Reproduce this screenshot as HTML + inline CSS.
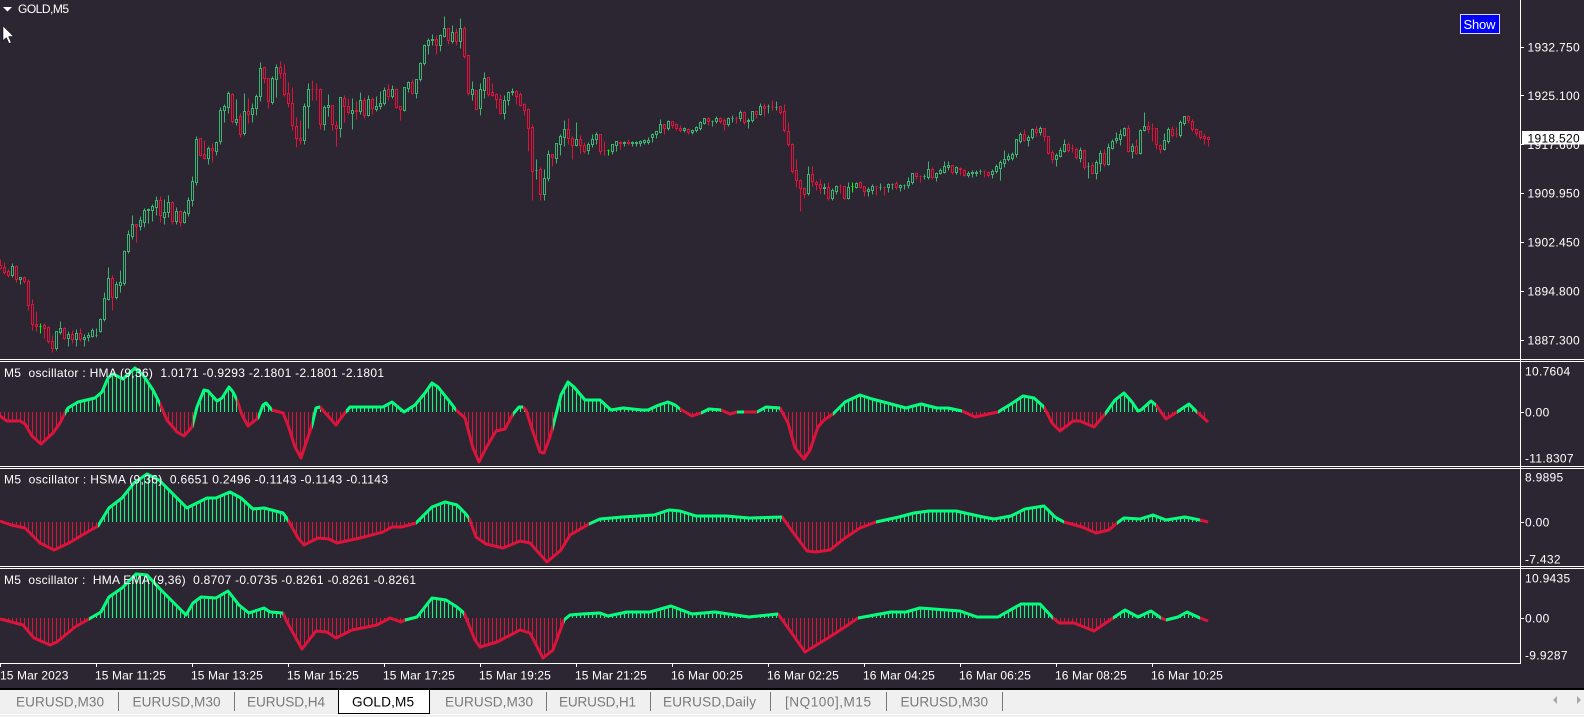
<!DOCTYPE html>
<html><head><meta charset="utf-8"><title>GOLD,M5</title>
<style>
html,body{margin:0;padding:0;background:#2b2632;width:1584px;height:717px;overflow:hidden}
svg{display:block}
text{font-family:"Liberation Sans",sans-serif;font-size:12px;fill:#fff;white-space:pre}
.ax{letter-spacing:.3px}
.dt{letter-spacing:.1px}
.tb{font-size:13.6px;fill:#7a7a7a}
</style></head><body>
<svg width="1584" height="717" viewBox="0 0 1584 717" xmlns="http://www.w3.org/2000/svg">
<defs>
<pattern id="pg" patternUnits="userSpaceOnUse" width="4" height="10"><rect width="1" height="10" fill="#00ff7f" shape-rendering="crispEdges"/></pattern>
<pattern id="pr" patternUnits="userSpaceOnUse" width="4" height="10"><rect width="1" height="10" fill="#dc143c" shape-rendering="crispEdges"/></pattern>
<path id="c1" d="M0 416L7 421 20 421 25 424 32 436 41 444 53 433 60 423 65 413 68 408 78 402 95 398 102 392 108 378 113 374 123 379 135 368 143 375 153 390 160 404 167 420 177 432 184 436 192 427 193 423 197 407 204 390 208 391 217 401 222 398 229 387 233 392 237 400 242 415 248 426 258 418 263 405 266 403 272 410 283 413 288 425 295 447 301 458 312 425 316 408 320 407 336 425 344 414 350 407 367 407 383 407 392 402 404 412 415 405 425 393 432 383 438 387 450 402 456 410 465 418 473 448 479 462 486 448 496 431 505 429 513 414 519 407 523 407 526 410 534 435 540 452 544 453 550 437 553 426 561 395 568 382 574 387 585 400 597 400 600 400 611 410 623 408 642 410 648 410 659 405 668 402 675 405 680 409 692 416 701 413 709 409 721 410 730 414 737 412 744 412 757 412 766 407 780 408 788 423 795 448 804 459 810 450 818 427 824 420 833 414 845 402 860 395 872 399 891 404 906 408 921 404 937 408 948 408 962 411 975 417 998 412 1011 404 1023 396 1034 398 1044 407 1052 423 1060 431 1073 421 1080 421 1094 427 1105 414 1115 400 1124 393 1132 402 1138 411 1141 410 1151 401 1156 405 1166 419 1177 412 1189 404 1197 412 1208 422"/>
<path id="c2" d="M0 521L11 525 25 528 40 543 54 550 69 543 84 534 98 526 109 508 122 498 134 483 147 474 159 480 172 493 187 508 195 504 207 498 216 498 230 492 241 498 253 509 264 508 283 513 288 520 298 538 304 545 318 538 329 539 337 543 360 538 383 532 392 527 402 527 416 523 432 507 445 502 457 505 465 513 469 518 476 537 486 544 503 548 520 541 530 543 547 562 561 550 570 535 589 524 600 519 623 517 654 515 669 510 680 511 696 516 726 516 749 518 782 517 795 535 807 551 816 552 830 550 845 538 860 528 876 522 899 517 914 513 929 511 956 511 983 517 994 519 1011 516 1025 509 1044 506 1055 517 1064 522 1082 527 1096 533 1109 530 1117 523 1124 518 1140 519 1153 515 1166 520 1185 517 1200 520 1208 522"/>
<path id="c3" d="M0 619L23 625 34 638 50 645 57 642 75 627 89 619 101 612 109 597 122 588 136 574 147 575 161 590 186 615 193 603 201 597 216 598 228 591 239 605 249 613 264 608 270 612 283 613 287 622 302 649 316 631 327 632 336 638 352 630 377 625 390 618 401 622 405 620 417 617 432 598 446 600 457 607 464 613 475 640 480 647 497 642 520 630 530 633 543 658 553 650 564 620 570 615 582 614 600 613 608 616 627 612 650 612 671 606 692 614 715 612 749 617 778 614 791 632 805 652 828 638 845 627 858 618 891 612 906 612 920 608 960 611 977 617 998 617 1021 604 1040 604 1053 618 1059 623 1074 623 1094 631 1113 618 1125 610 1138 617 1151 611 1161 618 1166 620 1178 617 1187 612 1200 618 1208 621"/>
<path id="h1" d="M0 412V416L7 421 20 421 25 424 32 436 41 444 53 433 60 423 65 413 68 408 78 402 95 398 102 392 108 378 113 374 123 379 135 368 143 375 153 390 160 404 167 420 177 432 184 436 192 427 193 423 197 407 204 390 208 391 217 401 222 398 229 387 233 392 237 400 242 415 248 426 258 418 263 405 266 403 272 410 283 413 288 425 295 447 301 458 312 425 316 408 320 407 336 425 344 414 350 407 367 407 383 407 392 402 404 412 415 405 425 393 432 383 438 387 450 402 456 410 465 418 473 448 479 462 486 448 496 431 505 429 513 414 519 407 523 407 526 410 534 435 540 452 544 453 550 437 553 426 561 395 568 382 574 387 585 400 597 400 600 400 611 410 623 408 642 410 648 410 659 405 668 402 675 405 680 409 692 416 701 413 709 409 721 410 730 414 737 412 744 412 757 412 766 407 780 408 788 423 795 448 804 459 810 450 818 427 824 420 833 414 845 402 860 395 872 399 891 404 906 408 921 404 937 408 948 408 962 411 975 417 998 412 1011 404 1023 396 1034 398 1044 407 1052 423 1060 431 1073 421 1080 421 1094 427 1105 414 1115 400 1124 393 1132 402 1138 411 1141 410 1151 401 1156 405 1166 419 1177 412 1189 404 1197 412 1208 422V412Z"/>
<path id="h2" d="M0 522V521L11 525 25 528 40 543 54 550 69 543 84 534 98 526 109 508 122 498 134 483 147 474 159 480 172 493 187 508 195 504 207 498 216 498 230 492 241 498 253 509 264 508 283 513 288 520 298 538 304 545 318 538 329 539 337 543 360 538 383 532 392 527 402 527 416 523 432 507 445 502 457 505 465 513 469 518 476 537 486 544 503 548 520 541 530 543 547 562 561 550 570 535 589 524 600 519 623 517 654 515 669 510 680 511 696 516 726 516 749 518 782 517 795 535 807 551 816 552 830 550 845 538 860 528 876 522 899 517 914 513 929 511 956 511 983 517 994 519 1011 516 1025 509 1044 506 1055 517 1064 522 1082 527 1096 533 1109 530 1117 523 1124 518 1140 519 1153 515 1166 520 1185 517 1200 520 1208 522Z"/>
<path id="h3" d="M0 618V619L23 625 34 638 50 645 57 642 75 627 89 619 101 612 109 597 122 588 136 574 147 575 161 590 186 615 193 603 201 597 216 598 228 591 239 605 249 613 264 608 270 612 283 613 287 622 302 649 316 631 327 632 336 638 352 630 377 625 390 618 401 622 405 620 417 617 432 598 446 600 457 607 464 613 475 640 480 647 497 642 520 630 530 633 543 658 553 650 564 620 570 615 582 614 600 613 608 616 627 612 650 612 671 606 692 614 715 612 749 617 778 614 791 632 805 652 828 638 845 627 858 618 891 612 906 612 920 608 960 611 977 617 998 617 1021 604 1040 604 1053 618 1059 623 1074 623 1094 631 1113 618 1125 610 1138 617 1151 611 1161 618 1166 620 1178 617 1187 612 1200 618 1208 621V618Z"/>
<clipPath id="a1"><rect x="0" y="362" width="1520" height="50"/></clipPath>
<clipPath id="b1"><rect x="0" y="412" width="1520" height="54"/></clipPath>
<clipPath id="a2"><rect x="0" y="469" width="1520" height="53"/></clipPath>
<clipPath id="b2"><rect x="0" y="522" width="1520" height="44"/></clipPath>
<clipPath id="a3"><rect x="0" y="569" width="1520" height="49"/></clipPath>
<clipPath id="b3"><rect x="0" y="618" width="1520" height="45"/></clipPath>
<clipPath id="g1"><rect x="65" y="360" width="95" height="106"/><rect x="193" y="360" width="44" height="106"/><rect x="258" y="360" width="14" height="106"/><rect x="312" y="360" width="8" height="106"/><rect x="346" y="360" width="110" height="106"/><rect x="513" y="360" width="10" height="106"/><rect x="553" y="360" width="127" height="106"/><rect x="701" y="360" width="20" height="106"/><rect x="737" y="360" width="7" height="106"/><rect x="757" y="360" width="23" height="106"/><rect x="833" y="360" width="129" height="106"/><rect x="998" y="360" width="46" height="106"/><rect x="1105" y="360" width="51" height="106"/><rect x="1177" y="360" width="20" height="106"/></clipPath>
<clipPath id="g2"><rect x="98" y="469" width="190" height="97"/><rect x="416" y="469" width="53" height="97"/><rect x="589" y="469" width="193" height="97"/><rect x="876" y="469" width="188" height="97"/><rect x="1117" y="469" width="83" height="97"/></clipPath>
<clipPath id="g3"><rect x="89" y="569" width="194" height="94"/><rect x="405" y="569" width="59" height="94"/><rect x="564" y="569" width="214" height="94"/><rect x="858" y="569" width="195" height="94"/><rect x="1113" y="569" width="48" height="94"/><rect x="1166" y="569" width="34" height="94"/></clipPath>
</defs>
<rect width="1584" height="717" fill="#2b2632"/>

<!-- candles -->
<g transform="translate(.5 .5)" shape-rendering="crispEdges" stroke-linecap="butt">
<path fill="none" stroke="#3cb371" d="M12 263V277M20 277V284M56 331V350M60 321V334M68 331V346M76 329V346M84 334V346M88 332V341M92 328V337M96 328V337M100 318V332M104 292V321M108 267V300M116 281V299M120 270V292M124 250V285M128 230V253M132 215V239M140 216V230M144 208V227M148 208V223M152 204V221M156 196V215M164 199V224M168 195V217M176 207V224M184 210V223M188 197V216M192 176V206M196 136V185M208 146V164M216 141V155M220 107V144M224 104V122M228 91V113M236 99V125M244 93V135M252 103V122M256 94V115M260 62V101M272 76V104M276 64V97M304 103V144M308 83V128M324 105V130M328 94V116M340 97V137M352 98V129M360 92V114M368 95V116M376 96V111M380 91V109M384 87V105M392 85V98M404 87V111M408 81V92M416 79V98M420 62V81M424 44V65M428 38V54M432 34V45M440 34V51M444 16V37M452 25V43M460 18V48M472 81V100M480 83V115M484 72V98M504 95V119M508 91V105M512 88V95M536 159V179M544 169V200M548 150V181M556 143V163M560 134V155M564 120V146M576 122V146M588 142V154M592 134V147M596 132V144M612 144V154M616 141V151M624 141V146M632 141V146M636 141V146M640 140V146M644 139V144M648 137V144M652 133V142M656 131V138M660 119V133M668 120V130M684 127V132M692 129V134M696 126V132M700 121V130M704 118V124M712 120V126M716 116V123M728 117V126M732 115V122M740 110V121M748 118V128M752 111V122M760 103V115M768 104V113M776 101V110M808 166V195M824 183V194M832 188V200M836 185V194M848 182V199M856 182V188M868 187V196M872 184V194M880 183V190M888 183V192M892 183V189M900 184V191M904 184V189M908 177V188M912 173V184M924 174V179M928 161V179M936 172V181M940 168V174M944 161V173M948 161V170M956 166V174M968 171V177M972 170V177M976 170V176M980 169V174M992 169V178M996 164V173M1000 160V180M1004 150V167M1008 153V161M1012 152V160M1016 139V157M1020 132V143M1028 135V146M1032 128V139M1040 126V135M1056 153V166M1060 147V157M1064 139V152M1080 147V162M1088 162V178M1096 160V179M1100 150V171M1108 143V165M1112 139V149M1116 132V143M1120 129V145M1124 127V136M1132 143V158M1140 129V154M1144 112V131M1164 133V150M1168 127V143M1180 120V137M1184 116V125"/>
<path fill="none" stroke="#dc143c" d="M0 259V269M4 262V274M8 269V277M16 265V282M24 276V283M28 279V310M32 299V330M36 311V331M44 323V338M48 326V343M52 335V352M64 327V339M72 330V343M80 328V341M112 275V310M136 224V242M160 196V222M172 201V224M180 210V226M200 138V156M204 140V159M212 143V162M232 93V123M240 113V137M248 98V123M264 67V83M268 78V108M280 61V78M284 64V96M288 82V107M292 87V130M296 117V147M300 120V144M312 80V100M316 83V100M320 88V129M332 105V130M336 121V146M344 95V122M348 98V114M356 101V119M364 97V118M372 97V114M388 84V100M396 88V108M400 106V120M412 79V94M436 35V54M448 28V44M456 28V45M464 26V58M468 55V95M476 90V110M488 77V96M492 83V96M496 93V108M500 94V114M516 90V104M520 92V106M524 103V115M528 108V151M532 124V200M540 167V200M552 154V166M568 118V144M572 136V159M580 135V153M584 142V153M600 134V154M604 141V155M620 141V149M628 139V145M664 124V134M672 121V128M676 123V130M680 125V132M688 128V134M708 117V125M720 117V123M724 118V130M736 116V123M744 111V124M756 111V118M764 103V116M772 100V110M780 106V114M784 104V132M788 122V146M792 143V173M796 159V187M800 179V211M804 187V198M812 166V186M816 180V190M820 179V193M828 182V200M840 184V193M844 186V199M860 181V188M864 186V196M876 186V195M884 186V195M896 181V189M916 172V179M920 175V182M932 167V179M952 165V174M960 167V175M964 169V176M984 170V177M988 171V177M1024 129V141M1036 126V136M1044 128V141M1048 136V154M1052 150V163M1068 142V152M1072 144V152M1076 147V159M1084 149V169M1092 162V174M1104 149V166M1128 125V152M1136 139V154M1148 121V133M1152 123V141M1156 128V149M1160 144V153M1172 126V137M1176 127V137M1188 115V123M1192 119V131M1196 128V136M1200 131V139M1204 133V144M1208 136V146"/>
<path fill="none" stroke="#00ff00" d="M40 323V333M608 149V155M852 182V192"/>
<path fill="#2b2632" stroke="#3cb371" d="M11 266h2V275h-2zM19 277h2V279h-2zM55 331h2V348h-2zM59 328h2V332h-2zM67 334h2V338h-2zM75 333h2V339h-2zM83 337h2V339h-2zM87 335h2V337h-2zM91 330h2V336h-2zM95 335h2M99 319h2V331h-2zM103 298h2V319h-2zM107 278h2V299h-2zM115 284h2V297h-2zM119 282h2V285h-2zM123 251h2V283h-2zM127 234h2V251h-2zM131 224h2V236h-2zM139 220h2V226h-2zM143 210h2V222h-2zM147 209h2V210h-2zM151 206h2V210h-2zM155 200h2V207h-2zM163 212h2V217h-2zM167 202h2V212h-2zM175 211h2V221h-2zM183 212h2V222h-2zM187 200h2V213h-2zM191 181h2V200h-2zM195 139h2V182h-2zM207 148h2V158h-2zM215 142h2V151h-2zM219 110h2V141h-2zM223 106h2V110h-2zM227 93h2V107h-2zM235 119h2V122h-2zM243 111h2V133h-2zM251 108h2V114h-2zM255 96h2V108h-2zM259 68h2V96h-2zM271 78h2V102h-2zM275 67h2V79h-2zM303 106h2V140h-2zM307 89h2V106h-2zM323 107h2V124h-2zM327 105h2V107h-2zM339 97h2V128h-2zM351 110h2V113h-2zM359 100h2V111h-2zM367 99h2V115h-2zM375 106h2V109h-2zM379 103h2V106h-2zM383 90h2V103h-2zM391 89h2V96h-2zM403 87h2V110h-2zM407 82h2V88h-2zM415 79h2V93h-2zM419 63h2V79h-2zM423 45h2V63h-2zM427 40h2V45h-2zM431 39h2V40h-2zM439 35h2V45h-2zM443 28h2V36h-2zM451 32h2V41h-2zM459 28h2V41h-2zM471 89h2V94h-2zM479 89h2V108h-2zM483 78h2V90h-2zM503 100h2V113h-2zM507 92h2V100h-2zM511 91h2V92h-2zM535 170h2M543 178h2V194h-2zM547 154h2V178h-2zM555 143h2V158h-2zM559 136h2V144h-2zM563 129h2V137h-2zM575 139h2V145h-2zM587 144h2V150h-2zM591 139h2V144h-2zM595 134h2V139h-2zM611 144h2V151h-2zM615 141h2V145h-2zM623 142h2V143h-2zM631 142h2V143h-2zM635 142h2V143h-2zM639 141h2V143h-2zM643 140h2V142h-2zM647 140h2V142h-2zM651 134h2V137h-2zM655 131h2V134h-2zM659 124h2V132h-2zM667 121h2V128h-2zM683 128h2V130h-2zM691 130h2V132h-2zM695 127h2V130h-2zM699 122h2V128h-2zM703 118h2V123h-2zM711 121h2M715 118h2V121h-2zM727 118h2V124h-2zM731 118h2M739 112h2V118h-2zM747 120h2V121h-2zM751 111h2V120h-2zM759 106h2V114h-2zM767 106h2M775 107h2M807 174h2V193h-2zM823 187h2V188h-2zM831 190h2V198h-2zM835 186h2V191h-2zM847 187h2V198h-2zM855 183h2V187h-2zM867 189h2V191h-2zM871 186h2V190h-2zM879 187h2M887 184h2V187h-2zM891 184h2M899 185h2V187h-2zM903 185h2M907 181h2V185h-2zM911 173h2V182h-2zM923 176h2M927 169h2V177h-2zM935 173h2V177h-2zM939 170h2V173h-2zM943 166h2V172h-2zM947 165h2V167h-2zM955 167h2V172h-2zM967 173h2V175h-2zM971 172h2V173h-2zM975 172h2V173h-2zM979 171h2M991 171h2V174h-2zM995 166h2V171h-2zM999 162h2V168h-2zM1003 159h2V163h-2zM1007 156h2V159h-2zM1011 154h2V158h-2zM1015 139h2V154h-2zM1019 134h2V141h-2zM1027 137h2V140h-2zM1031 129h2V137h-2zM1039 128h2V132h-2zM1055 155h2V159h-2zM1059 150h2V156h-2zM1063 144h2V151h-2zM1079 150h2V158h-2zM1087 166h2M1095 162h2V173h-2zM1099 153h2V163h-2zM1107 147h2V164h-2zM1111 141h2V148h-2zM1115 138h2V140h-2zM1119 134h2V139h-2zM1123 128h2V135h-2zM1131 146h2V151h-2zM1139 130h2V153h-2zM1143 126h2V130h-2zM1163 140h2V149h-2zM1167 129h2V141h-2zM1179 122h2V135h-2zM1183 116h2V123h-2z"/>
<path fill="#2b2632" stroke="#dc143c" d="M-1 265h2V268h-2zM3 267h2V272h-2zM7 271h2V275h-2zM15 266h2V279h-2zM23 277h2V281h-2zM27 281h2V305h-2zM31 304h2V324h-2zM35 324h2V326h-2zM43 325h2V328h-2zM47 327h2V341h-2zM51 341h2V348h-2zM63 328h2V338h-2zM71 334h2V339h-2zM79 333h2V339h-2zM111 278h2V297h-2zM135 224h2V226h-2zM159 200h2V215h-2zM171 202h2V221h-2zM179 211h2V222h-2zM199 138h2V155h-2zM203 154h2V158h-2zM211 148h2V150h-2zM231 94h2V121h-2zM239 116h2V134h-2zM247 111h2V114h-2zM263 67h2V78h-2zM267 78h2V101h-2zM279 67h2V73h-2zM283 73h2V94h-2zM287 93h2V103h-2zM291 103h2V125h-2zM295 126h2V138h-2zM299 138h2V140h-2zM311 89h2M315 89h2M319 89h2V124h-2zM331 105h2V124h-2zM335 125h2V128h-2zM343 98h2V106h-2zM347 106h2V112h-2zM355 110h2V111h-2zM363 100h2V115h-2zM371 99h2V108h-2zM387 89h2V96h-2zM395 89h2V107h-2zM399 106h2V109h-2zM411 82h2V93h-2zM435 39h2V45h-2zM447 28h2V40h-2zM455 32h2V41h-2zM463 28h2V56h-2zM467 55h2V93h-2zM475 90h2V109h-2zM487 77h2V94h-2zM491 92h2V95h-2zM495 94h2V99h-2zM499 99h2V113h-2zM515 91h2V96h-2zM519 94h2V105h-2zM523 104h2V110h-2zM527 109h2V128h-2zM531 127h2V171h-2zM539 169h2V194h-2zM551 154h2V157h-2zM567 129h2V138h-2zM571 138h2V145h-2zM579 139h2V145h-2zM583 145h2V151h-2zM599 134h2V151h-2zM603 150h2M619 142h2V143h-2zM627 142h2V143h-2zM663 124h2V128h-2zM671 121h2V125h-2zM675 124h2V128h-2zM679 128h2V130h-2zM687 129h2V132h-2zM707 118h2V121h-2zM719 118h2V121h-2zM723 120h2V124h-2zM735 118h2M743 112h2V122h-2zM755 111h2V114h-2zM763 106h2V108h-2zM771 107h2M779 106h2V112h-2zM783 111h2V130h-2zM787 131h2V144h-2zM791 144h2V171h-2zM795 170h2V180h-2zM799 180h2V188h-2zM803 188h2V194h-2zM811 174h2V181h-2zM815 182h2V184h-2zM819 184h2V188h-2zM827 187h2V198h-2zM839 186h2M843 186h2V198h-2zM859 182h2V187h-2zM863 186h2V191h-2zM875 186h2M883 187h2M895 183h2V187h-2zM915 173h2V176h-2zM919 176h2M931 169h2V177h-2zM951 165h2V172h-2zM959 168h2V169h-2zM963 170h2V175h-2zM983 171h2M987 172h2V175h-2zM1023 134h2V140h-2zM1035 129h2V132h-2zM1043 128h2V136h-2zM1047 136h2V153h-2zM1051 152h2V159h-2zM1067 144h2V150h-2zM1071 148h2M1075 149h2V157h-2zM1083 150h2V167h-2zM1091 165h2V173h-2zM1103 153h2V164h-2zM1127 128h2V151h-2zM1135 146h2V153h-2zM1147 126h2V129h-2zM1151 128h2M1155 128h2V144h-2zM1159 145h2V149h-2zM1171 129h2V135h-2zM1175 134h2M1187 116h2V120h-2zM1191 121h2V129h-2zM1195 129h2V133h-2zM1199 131h2V137h-2zM1203 136h2V138h-2zM1207 137h2V139h-2z"/>
<path fill="none" stroke="#00ff00" d="M39 326h2M607 150h2M851 186h2"/>
</g>

<!-- panel 1 -->
<g clip-path="url(#a1)"><use href="#h1" fill="url(#pg)"/></g>
<g clip-path="url(#b1)"><use href="#h1" fill="url(#pr)"/></g>
<use href="#c1" fill="none" stroke="#dc143c" stroke-width="3" stroke-linejoin="round"/>
<g clip-path="url(#g1)"><use href="#c1" fill="none" stroke="#00ff7f" stroke-width="3" stroke-linejoin="round"/></g>

<!-- panel 2 -->
<g clip-path="url(#a2)"><use href="#h2" fill="url(#pg)"/></g>
<g clip-path="url(#b2)"><use href="#h2" fill="url(#pr)"/></g>
<use href="#c2" fill="none" stroke="#dc143c" stroke-width="3" stroke-linejoin="round"/>
<g clip-path="url(#g2)"><use href="#c2" fill="none" stroke="#00ff7f" stroke-width="3" stroke-linejoin="round"/></g>

<!-- panel 3 -->
<g clip-path="url(#a3)"><use href="#h3" fill="url(#pg)"/></g>
<g clip-path="url(#b3)"><use href="#h3" fill="url(#pr)"/></g>
<use href="#c3" fill="none" stroke="#dc143c" stroke-width="3" stroke-linejoin="round"/>
<g clip-path="url(#g3)"><use href="#c3" fill="none" stroke="#00ff7f" stroke-width="3" stroke-linejoin="round"/></g>

<!-- frame lines -->
<g fill="#fff" shape-rendering="crispEdges">
<rect x="1520" y="0" width="1" height="664"/>
<rect x="0" y="359" width="1584" height="1"/><rect x="0" y="361" width="1584" height="1"/>
<rect x="0" y="466" width="1584" height="1"/><rect x="0" y="468" width="1584" height="1"/>
<rect x="0" y="566" width="1584" height="1"/><rect x="0" y="568" width="1584" height="1"/>
<rect x="0" y="663" width="1521" height="1"/>
<rect x="1521" y="47" width="3" height="1"/><rect x="1521" y="95" width="3" height="1"/><rect x="1521" y="144" width="3" height="1"/><rect x="1521" y="193" width="3" height="1"/><rect x="1521" y="242" width="3" height="1"/><rect x="1521" y="291" width="3" height="1"/><rect x="1521" y="340" width="3" height="1"/>
<rect x="1521" y="412" width="3" height="1"/><rect x="1521" y="522" width="3" height="1"/><rect x="1521" y="618" width="3" height="1"/>
<rect x="0" y="664" width="1" height="3"/><rect x="96" y="664" width="1" height="3"/><rect x="192" y="664" width="1" height="3"/><rect x="288" y="664" width="1" height="3"/><rect x="384" y="664" width="1" height="3"/><rect x="480" y="664" width="1" height="3"/><rect x="576" y="664" width="1" height="3"/><rect x="672" y="664" width="1" height="3"/><rect x="768" y="664" width="1" height="3"/><rect x="864" y="664" width="1" height="3"/><rect x="960" y="664" width="1" height="3"/><rect x="1056" y="664" width="1" height="3"/><rect x="1152" y="664" width="1" height="3"/>
</g>

<!-- top-left -->
<path d="M3 7H12L7.5 11.5Z" fill="#fff"/>
<text x="18" y="13" textLength="51" lengthAdjust="spacing">GOLD,M5</text>
<path d="M3 26V40.5L6.4 37.5 9 43.5 11.2 42.5 8.6 36.5H13.5Z" fill="#fff" stroke="#000" stroke-width=".5"/>

<!-- Show button -->
<rect x="1460.5" y="14.5" width="39" height="19" fill="#0000ff" stroke="#d8d8e8"/>
<text x="1463.5" y="29" textLength="32" lengthAdjust="spacing" style="font-size:13px">Show</text>

<!-- panel titles -->
<text x="4" y="377" textLength="380" lengthAdjust="spacing">M5  oscillator : HMA (9,36)  1.0171 -0.9293 -2.1801 -2.1801 -2.1801</text>
<text x="4" y="483.5" textLength="384" lengthAdjust="spacing">M5  oscillator : HSMA (9,36)  0.6651 0.2496 -0.1143 -0.1143 -0.1143</text>
<text x="4" y="584" textLength="412" lengthAdjust="spacing">M5  oscillator :  HMA EMA (9,36)  0.8707 -0.0735 -0.8261 -0.8261 -0.8261</text>

<!-- price axis -->
<g class="ax">
<text class="ax" x="1527.5" y="51.5">1932.750</text>
<text class="ax" x="1527.5" y="100">1925.100</text>
<text class="ax" x="1527.5" y="149">1917.600</text>
<rect x="1522" y="131" width="62" height="13.5" fill="#fff"/>
<text class="ax" x="1527.5" y="142.5" style="fill:#000">1918.520</text>
<text class="ax" x="1527.5" y="197.5">1909.950</text>
<text class="ax" x="1527.5" y="246.5">1902.450</text>
<text class="ax" x="1527.5" y="295.5">1894.800</text>
<text class="ax" x="1527.5" y="344.5">1887.300</text>
<text class="ax" x="1525" y="375.5">10.7604</text>
<text class="ax" x="1525" y="416.5">0.00</text>
<text class="ax" x="1525" y="462.5">-11.8307</text>
<text class="ax" x="1525" y="481.5">8.9895</text>
<text class="ax" x="1525" y="526.5">0.00</text>
<text class="ax" x="1525" y="563.5">-7.432</text>
<text class="ax" x="1525" y="582.5">10.9435</text>
<text class="ax" x="1525" y="622.5">0.00</text>
<text class="ax" x="1525" y="659.5">-9.9287</text>
</g>

<!-- time axis -->
<g>
<text class="dt" x="0" y="679.5">15 Mar 2023</text>
<text class="dt" x="95" y="679.5">15 Mar 11:25</text>
<text class="dt" x="191" y="679.5">15 Mar 13:25</text>
<text class="dt" x="287" y="679.5">15 Mar 15:25</text>
<text class="dt" x="383" y="679.5">15 Mar 17:25</text>
<text class="dt" x="479" y="679.5">15 Mar 19:25</text>
<text class="dt" x="575" y="679.5">15 Mar 21:25</text>
<text class="dt" x="671" y="679.5">16 Mar 00:25</text>
<text class="dt" x="767" y="679.5">16 Mar 02:25</text>
<text class="dt" x="863" y="679.5">16 Mar 04:25</text>
<text class="dt" x="959" y="679.5">16 Mar 06:25</text>
<text class="dt" x="1055" y="679.5">16 Mar 08:25</text>
<text class="dt" x="1151" y="679.5">16 Mar 10:25</text>
</g>

<!-- tab bar -->
<g shape-rendering="crispEdges">
<rect x="0" y="688" width="1584" height="2" fill="#000"/>
<rect x="0" y="690" width="1584" height="27" fill="#f0f0f0"/>
<rect x="0" y="714" width="1584" height="1" fill="#fbfbfb"/>
<rect x="118" y="692" width="1" height="19" fill="#777"/>
<rect x="234" y="692" width="1" height="19" fill="#777"/>
<rect x="546" y="692" width="1" height="19" fill="#777"/>
<rect x="650" y="692" width="1" height="19" fill="#777"/>
<rect x="770" y="692" width="1" height="19" fill="#777"/>
<rect x="886" y="692" width="1" height="19" fill="#777"/>
<rect x="1002" y="692" width="1" height="19" fill="#777"/>
<rect x="338" y="689" width="92" height="25" fill="#000"/>
<rect x="339" y="690" width="90" height="23" fill="#fff"/>
</g>
<text class="tb" x="16" y="706.5" textLength="88" lengthAdjust="spacing">EURUSD,M30</text>
<text class="tb" x="132.5" y="706.5" textLength="88" lengthAdjust="spacing">EURUSD,M30</text>
<text class="tb" x="247" y="706.5" textLength="78" lengthAdjust="spacing">EURUSD,H4</text>
<text class="tb" x="352" y="706.5" textLength="62" lengthAdjust="spacing" style="fill:#000">GOLD,M5</text>
<text class="tb" x="445" y="706.5" textLength="88" lengthAdjust="spacing">EURUSD,M30</text>
<text class="tb" x="559" y="706.5" textLength="77" lengthAdjust="spacing">EURUSD,H1</text>
<text class="tb" x="663" y="706.5" textLength="93" lengthAdjust="spacing">EURUSD,Daily</text>
<text class="tb" x="785" y="706.5" textLength="86" lengthAdjust="spacing">[NQ100],M15</text>
<text class="tb" x="900.5" y="706.5" textLength="87.5" lengthAdjust="spacing">EURUSD,M30</text>
<path d="M1553 700L1557 696V704Z" fill="#a8a8a8"/>
<path d="M1581 700L1577 696V704Z" fill="#a8a8a8"/>
</svg>
</body></html>
